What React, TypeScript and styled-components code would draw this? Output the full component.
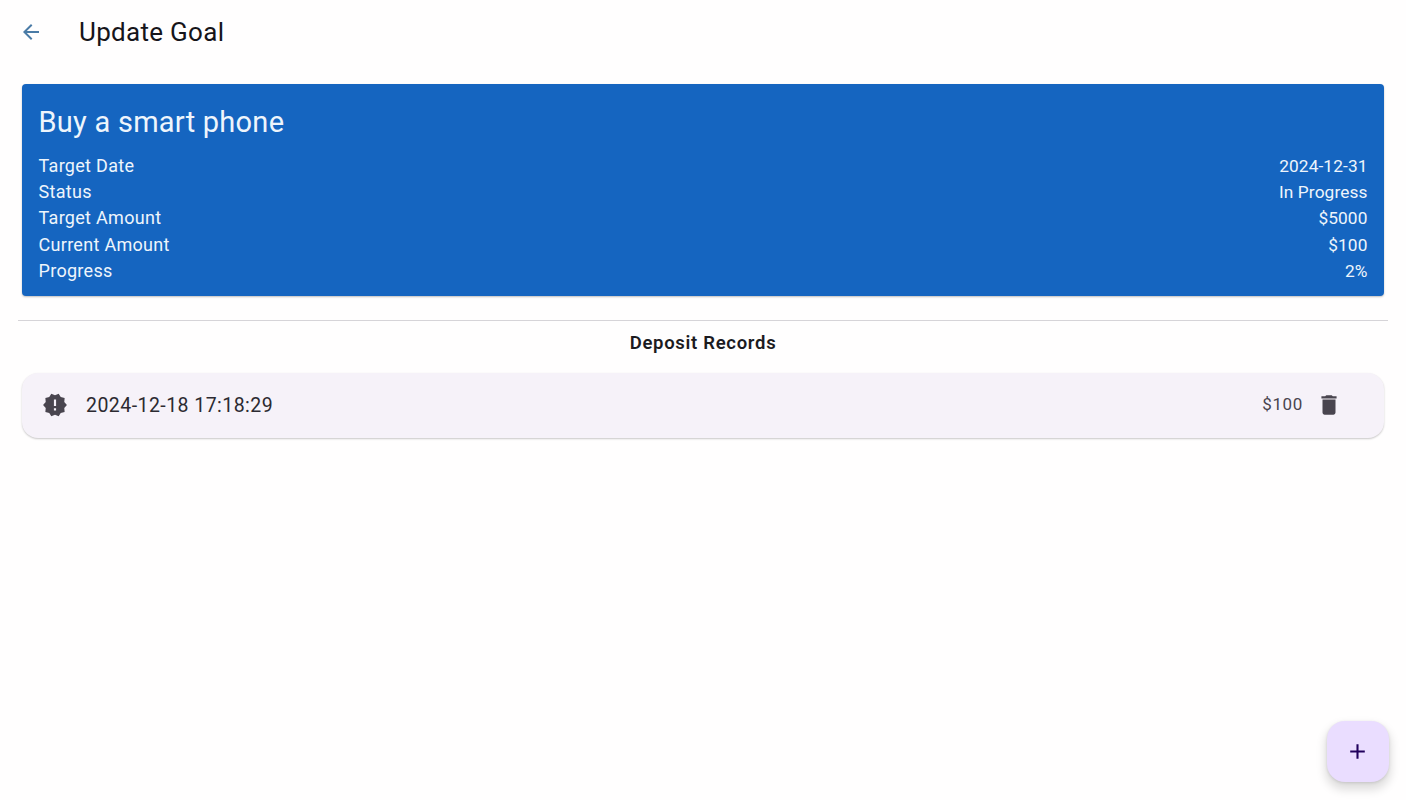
import React from 'react';
import styled, { createGlobalStyle } from 'styled-components';
import { MdAdd, MdArrowBack, MdDelete, MdNewReleases } from 'react-icons/md';

const GlobalStyle = createGlobalStyle`
  html, body {
    margin: 0;
    padding: 0;
    background: #fff;
    font-family: Roboto, "Liberation Sans", sans-serif;
  }
`;

const Page = styled.div`
  position: relative;
  width: 1406px;
  height: 800px;
  overflow: hidden;
  background: #fffefe;
`;

const AppBar = styled.header`
  display: flex;
  align-items: center;
  height: 63px;
  padding-left: 19px;
`;

const BackButton = styled.button`
  display: flex;
  width: 24px;
  height: 24px;
  padding: 0;
  margin-right: 36px;
  border: none;
  background: none;
  color: #4a7ba6;
  font-size: 24px;
`;

const PageTitle = styled.h1`
  margin: 0;
  font-size: 26px;
  font-weight: 400;
  letter-spacing: 0.3px;
  color: #16151a;
`;

const Content = styled.main`
  padding: 21px 18px 0;
`;

const GoalCard = styled.section`
  margin: 0 4px;
  padding: 20px 16.5px 12px;
  height: 212px;
  box-sizing: border-box;
  background: #1565c0;
  border-radius: 4px;
  color: #eef5fc;
  box-shadow: 0 1px 2px rgba(0, 0, 0, 0.25);
`;

const GoalName = styled.h2`
  margin: 0 0 13px;
  font-size: 29px;
  line-height: 36px;
  font-weight: 400;
  letter-spacing: 0.25px;
`;

const GoalRow = styled.div`
  display: flex;
  justify-content: space-between;
  line-height: 26.2px;
`;

const GoalLabel = styled.span`
  font-size: 18px;
  letter-spacing: 0.3px;
`;

const GoalValue = styled.span`
  font-size: 17.3px;
  letter-spacing: 0.1px;
`;

const Divider = styled.hr`
  margin: 24px 0 0;
  border: none;
  border-top: 1.5px solid #d6d4d8;
`;

const SectionTitle = styled.h3`
  margin: 0;
  height: 52px;
  font-size: 18.5px;
  line-height: 45px;
  font-weight: 600;
  letter-spacing: 0.7px;
  text-align: center;
  color: #1c1b1f;
`;

const RecordCard = styled.div`
  display: flex;
  align-items: center;
  height: 65px;
  box-sizing: border-box;
  margin: 0 4px;
  padding: 0 42px 2px 20px;
  background: #f6f2f9;
  border-radius: 16px;
  box-shadow: 0 1px 2px rgba(0, 0, 0, 0.22);
`;

const RecordDate = styled.span`
  flex: 1;
  margin: 1px 0 0 18px;
  font-size: 19.5px;
  letter-spacing: 0.45px;
  color: #2c2a31;
`;

const RecordAmount = styled.span`
  margin: 0 13px 1px 0;
  font-size: 17px;
  letter-spacing: 0.65px;
  color: #49454f;
`;

const IconSlot = styled.span`
  display: flex;
  color: #49454f;
  font-size: 26px;
`;

const Fab = styled.button`
  position: absolute;
  right: 17px;
  bottom: 18px;
  display: flex;
  align-items: center;
  justify-content: center;
  width: 62px;
  height: 61px;
  padding: 0 2px 0 0;
  border: none;
  border-radius: 18px;
  background: #eaddff;
  color: #21005d;
  font-size: 25px;
  box-shadow: 0 6px 10px 2px rgba(0, 0, 0, 0.13), 0 1px 3px rgba(0, 0, 0, 0.12);
`;

const goalRows = [
  { label: 'Target Date', value: '2024-12-31' },
  { label: 'Status', value: 'In Progress' },
  { label: 'Target Amount', value: '$5000' },
  { label: 'Current Amount', value: '$100' },
  { label: 'Progress', value: '2%' },
];

const App: React.FC = () => {
  return (
    <Page>
      <GlobalStyle />
      <AppBar>
        <BackButton aria-label="Back">
          <MdArrowBack />
        </BackButton>
        <PageTitle>Update Goal</PageTitle>
      </AppBar>
      <Content>
        <GoalCard>
          <GoalName>Buy a smart phone</GoalName>
          {goalRows.map((row) => (
            <GoalRow key={row.label}>
              <GoalLabel>{row.label}</GoalLabel>
              <GoalValue>{row.value}</GoalValue>
            </GoalRow>
          ))}
        </GoalCard>
        <Divider />
        <SectionTitle>Deposit Records</SectionTitle>
        <RecordCard>
          <IconSlot>
            <MdNewReleases />
          </IconSlot>
          <RecordDate>2024-12-18 17:18:29</RecordDate>
          <RecordAmount>$100</RecordAmount>
          <IconSlot>
            <MdDelete />
          </IconSlot>
        </RecordCard>
      </Content>
      <Fab aria-label="Add deposit">
        <MdAdd />
      </Fab>
    </Page>
  );
};

export default App;
